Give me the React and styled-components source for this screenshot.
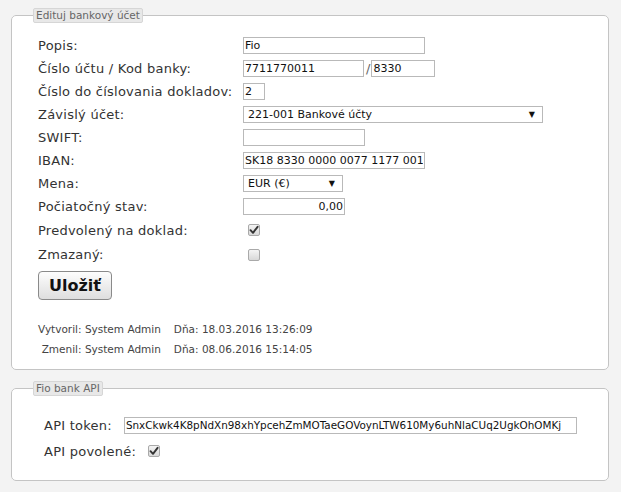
import React from "react";
import styled, { createGlobalStyle } from "styled-components";

const Global = createGlobalStyle`
  html, body { margin: 0; padding: 0; background: #f3f3f3; }
  body { font-family: "DejaVu Sans", Verdana, sans-serif; color: #333; }
  * { box-sizing: border-box; }
`;

const Page = styled.div`
  padding: 8px 12px 0 11px;
  width: 621px;
`;

const Fieldset = styled.fieldset`
  margin: 0 0 ${(p) => p.$mb || 0}px 0;
  padding: ${(p) => p.$pt}px 26px ${(p) => p.$pb}px 26px;
  border: 1px solid #c4c4c4;
  border-radius: 5px;
  background: #fff;
  min-width: 0;
`;

const Legend = styled.legend`
  margin-left: -5px;
  padding: 0 2px;
  height: 15px;
  line-height: 13px;
  font-size: 10.5px;
  color: #666;
  background: #e8e8e8;
  border: 1px solid #d6d6d6;
  border-radius: 2px;
`;

const FormGrid = styled.div`
  display: grid;
  grid-template-columns: 205px 1fr;
  align-items: center;
`;

const Label = styled.div`
  height: ${(p) => p.$h || 23}px;
  display: flex;
  align-items: center;
  font-size: 13px;
  letter-spacing: 0.25px;
  color: #333;
  white-space: nowrap;
`;

const Cell = styled.div`
  height: ${(p) => p.$h || 23}px;
  display: flex;
  align-items: center;
  font-size: 13px;
  color: #555;
`;

const TextInput = styled.input`
  width: ${(p) => p.$w}px;
  height: 17px;
  padding: 0 1px;
  margin: 0;
  border: 1px solid #b9b9b9;
  background: #fff;
  font-family: "DejaVu Sans", Verdana, sans-serif;
  font-size: ${(p) => p.$fs || 11}px;
  color: #111;
  text-align: ${(p) => p.$align || "left"};
  outline: none;
`;

const Slash = styled.span`
  margin: 0 1px 0 2px;
  font-size: 13px;
  color: #666;
`;

const SelectBox = styled.div`
  width: ${(p) => p.$w}px;
  height: 17px;
  border: 1px solid #b9b9b9;
  background: #fff;
  display: flex;
  align-items: center;
  justify-content: space-between;
  padding: 0 7px 0 4px;
  font-size: 11px;
  color: #111;
`;

const Arrow = styled.span`
  font-size: 8px;
  color: #111;
`;

const Box = styled.span`
  width: 12px;
  height: 12px;
  border: 1px solid #a9a9a9;
  border-radius: 2px;
  background: linear-gradient(#f4f4f4, #d8d8d8);
  display: inline-flex;
  align-items: center;
  justify-content: center;
  margin-left: ${(p) => p.$ml || 0}px;
`;

const Check = ({ checked, ml }) => (
  <Box $ml={ml}>
    {checked && (
      <svg width="10" height="10" viewBox="0 0 10 10">
        <path d="M1.5 5.2 L4 7.8 L8.6 1.8" fill="none" stroke="#333" strokeWidth="1.9" strokeLinecap="round" strokeLinejoin="round" />
      </svg>
    )}
  </Box>
);

const Button = styled.button`
  margin-top: 4px;
  width: 74px;
  height: 29px;
  border: 1px solid #8a8a8a;
  border-radius: 4px;
  background: linear-gradient(#fdfdfd, #dedede);
  font-family: "DejaVu Sans", Verdana, sans-serif;
  font-weight: bold;
  font-size: 16px;
  color: #111;
  padding: 0;
`;

const Audit = styled.table`
  margin-top: 19px;
  border-collapse: collapse;
  font-size: 10.5px;
  color: #444;
  td { padding: 0; height: 20px; line-height: 20px; white-space: nowrap; }
  td:first-child { text-align: right; padding-right: 13px; }
`;

const ApiGrid = styled.div`
  display: grid;
  grid-template-columns: auto 1fr;
  align-items: center;
  column-gap: 12px;
  padding-left: 6px;
`;

export default function App() {
  return (
    <Page>
      <Global />
      <Fieldset $pt={11} $pb={10} $mb={11}>
        <Legend>Edituj bankový účet</Legend>
        <FormGrid>
          <Label>Popis:</Label>
          <Cell><TextInput $w={182} defaultValue="Fio" /></Cell>
          <Label>Číslo účtu / Kod banky:</Label>
          <Cell>
            <TextInput $w={121} defaultValue="7711770011" />
            <Slash>/</Slash>
            <TextInput $w={64} defaultValue="8330" />
          </Cell>
          <Label>Číslo do číslovania dokladov:</Label>
          <Cell><TextInput $w={22} defaultValue="2" /></Cell>
          <Label>Závislý účet:</Label>
          <Cell><SelectBox $w={300}><span>221-001 Bankové účty</span><Arrow>▼</Arrow></SelectBox></Cell>
          <Label>SWIFT:</Label>
          <Cell><TextInput $w={122} defaultValue="" /></Cell>
          <Label>IBAN:</Label>
          <Cell><TextInput $w={182} defaultValue="SK18 8330 0000 0077 1177 001" /></Cell>
          <Label>Mena:</Label>
          <Cell><SelectBox $w={100}><span>EUR (€)</span><Arrow>▼</Arrow></SelectBox></Cell>
          <Label>Počiatočný stav:</Label>
          <Cell><TextInput $w={102} $align="right" defaultValue="0,00" /></Cell>
          <Label $h={24}>Predvolený na doklad:</Label>
          <Cell $h={24}><Check checked ml={5} /></Cell>
          <Label $h={25}>Zmazaný:</Label>
          <Cell $h={25}><Check ml={5} /></Cell>
        </FormGrid>
        <Button>Uložiť</Button>
        <Audit>
          <tbody>
            <tr><td>Vytvoril: System Admin</td><td>Dňa: 18.03.2016 13:26:09</td></tr>
            <tr><td>Zmenil: System Admin</td><td>Dňa: 08.06.2016 15:14:05</td></tr>
          </tbody>
        </Audit>
      </Fieldset>
      <Fieldset $pt={16} $pb={16}>
        <Legend>Fio bank API</Legend>
        <ApiGrid>
          <Label $h={26}>API token:</Label>
          <Cell $h={26}><TextInput $w={453} $fs={10.4} defaultValue="SnxCkwk4K8pNdXn98xhYpcehZmMOTaeGOVoynLTW610My6uhNlaCUq2UgkOhOMKj" /></Cell>
        </ApiGrid>
        <ApiGrid>
          <Label $h={26}>API povolené:</Label>
          <Cell $h={26}><Check checked /></Cell>
        </ApiGrid>
      </Fieldset>
    </Page>
  );
}
